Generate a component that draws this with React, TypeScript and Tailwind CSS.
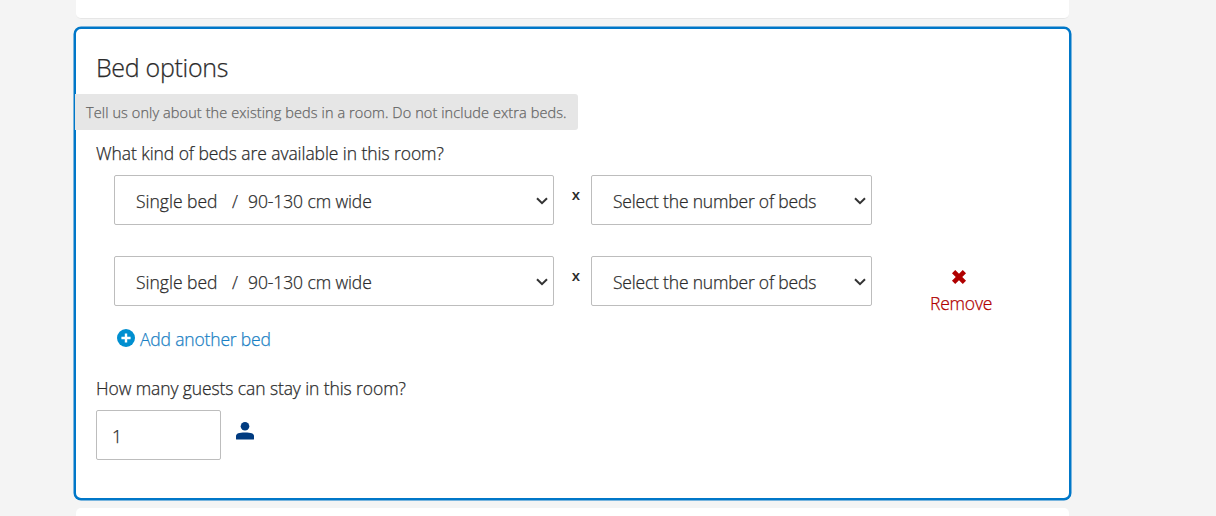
import React from "react";

function Chevron() {
  return (
    <svg className="mt-px h-[8px] w-[12px] shrink-0" viewBox="0 0 12 8" fill="none" stroke="#333" strokeWidth="2">
      <path d="M1 1.2 6 6.2 11 1.2" />
    </svg>
  );
}

function SelectBox({ width, children }: { width: string; children: React.ReactNode }) {
  return (
    <button
      className={`flex h-[50px] items-center justify-between rounded-[2px] border border-[#bdbdbd] bg-white pr-[5px] pl-[21px] text-left ${width}`}
    >
      <span className="mt-[3px]">{children}</span>
      <Chevron />
    </button>
  );
}

function BedRow({ removable = false }: { removable?: boolean }) {
  return (
    <div className="flex h-[50px] items-start">
      <SelectBox width="w-[440px]">
        <span className="flex">
          <span className="w-[96px]">Single bed</span>
          <span className="w-[16px]">/</span>
          <span className="tracking-[-0.1px]">90-130 cm wide</span>
        </span>
      </SelectBox>
      <span className="flex h-[38px] w-[37px] items-center justify-center pl-[7px] text-[15px] font-semibold [-webkit-text-stroke:0px]">
        x
      </span>
      <SelectBox width="w-[281px]">
        <span className="tracking-[-0.19px]">Select the number of beds</span>
      </SelectBox>
      {removable && (
        <button className="ml-[58px] flex flex-col items-start pt-[13px] text-[#b00000]">
          <svg className="ml-[21px] h-[16px] w-[16px]" viewBox="0 0 16 16">
            <path d="M2.600 2.600 13.400 13.400M13.400 2.600 2.600 13.400" stroke="currentColor" strokeWidth="4.6" />
          </svg>
          <span className="mt-[6px] leading-[24px] tracking-[-0.2px]">Remove</span>
        </button>
      )}
    </div>
  );
}

export default function App() {
  return (
    <main className="flex h-[516px] flex-col overflow-hidden bg-[#f4f4f4] pl-[74px] font-['Open_Sans','Noto_Sans',sans-serif] text-[17.5px] font-light text-[#2b2b2b] [-webkit-text-stroke:0.25px]">
      <div className="ml-[2px] h-[19px] w-[993px] shrink-0 rounded-b-[5px] border-b border-[#e6e6e6] bg-white" />
      <section className="mt-[8px] flex h-[473px] w-[997px] shrink-0 flex-col rounded-[7px] border-[2px] border-[#0077c8] bg-white shadow-[0_0_0_0.5px_#0077c8]">
        <h2 className="ml-[20px] mt-[20px] h-[36px] text-[25px] leading-[36px] tracking-[-0.3px]">Bed options</h2>
        <div className="-ml-px mt-[9px] h-[36px] w-[503px] rounded-r-[3px] bg-[#e6e6e6] pl-[11px] text-[14.5px] leading-[37px] tracking-[0.1px] text-[#666]">
          Tell us only about the existing beds in a room. Do not include extra beds.
        </div>
        <p className="ml-[20px] mt-[11px] h-[24px] leading-[24px] tracking-[-0.07px]">
          What kind of beds are available in this room?
        </p>
        <div className="ml-[38px] mt-[10px] flex flex-col gap-[31px]">
          <BedRow />
          <BedRow removable />
        </div>
        <button className="ml-[41px] mt-[20px] flex h-[26px] items-center self-start tracking-[-0.17px] text-[#1a7fc4]">
          <svg className="mb-[2px] mr-[5px] h-[18px] w-[18px]" viewBox="0 0 18 18">
            <circle cx="9" cy="9" r="9" fill="#008fd0" />
            <path d="M9 4.4v9.2M4.4 9h9.2" stroke="white" strokeWidth="2.4" />
          </svg>
          <span>Add another bed</span>
        </button>
        <p className="ml-[20px] mt-[24px] h-[24px] leading-[24px] tracking-[-0.1px]">
          How many guests can stay in this room?
        </p>
        <div className="ml-[20px] mt-[10px] flex items-start gap-[15px]">
          <input
            className="h-[50px] w-[125px] rounded-[2px] border border-[#bdbdbd] bg-white pt-[2px] pl-[15px]"
            defaultValue="1"
          />
          <svg className="mt-[12px] h-[18px] w-[18px]" viewBox="0 0 18 18" fill="#003b80">
            <circle cx="9" cy="4.3" r="4.3" />
            <path d="M0 17v-3c0-2.5 3-3.6 9-3.6s9 1.1 9 3.6v3q0 .6-.7.6H.7Q0 17.600 0 17Z" />
          </svg>
        </div>
      </section>
      <div className="ml-[2px] mt-[8px] h-[40px] w-[993px] shrink-0 rounded-t-[5px] bg-white" />
    </main>
  );
}
